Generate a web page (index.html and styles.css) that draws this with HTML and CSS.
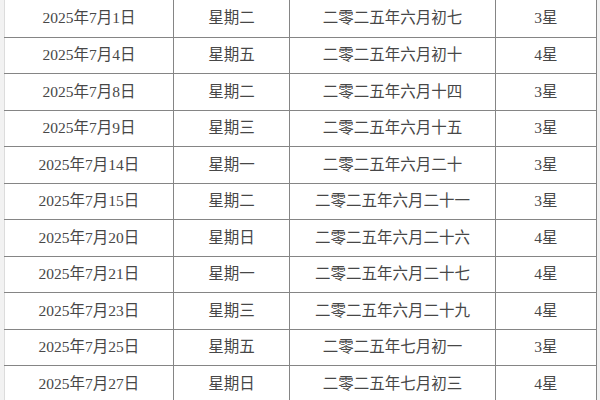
FILE: index.html
```html
<!DOCTYPE html>
<html lang="zh-CN">
<head>
<meta charset="utf-8">
<title>2025年7月</title>
<link rel="stylesheet" href="styles.css">
</head>
<body>
<div class="wrap">
<table class="cal">
<colgroup><col class="c1"><col class="c2"><col class="c3"><col class="c4"></colgroup>
<tbody>
<tr class="first"><td>2025年7月1日</td><td>星期二</td><td>二零二五年六月初七</td><td>3星</td></tr>
<tr><td>2025年7月4日</td><td>星期五</td><td>二零二五年六月初十</td><td>4星</td></tr>
<tr><td>2025年7月8日</td><td>星期二</td><td>二零二五年六月十四</td><td>3星</td></tr>
<tr><td>2025年7月9日</td><td>星期三</td><td>二零二五年六月十五</td><td>3星</td></tr>
<tr><td>2025年7月14日</td><td>星期一</td><td>二零二五年六月二十</td><td>3星</td></tr>
<tr><td>2025年7月15日</td><td>星期二</td><td>二零二五年六月二十一</td><td>3星</td></tr>
<tr><td>2025年7月20日</td><td>星期日</td><td>二零二五年六月二十六</td><td>4星</td></tr>
<tr><td>2025年7月21日</td><td>星期一</td><td>二零二五年六月二十七</td><td>4星</td></tr>
<tr><td>2025年7月23日</td><td>星期三</td><td>二零二五年六月二十九</td><td>4星</td></tr>
<tr><td>2025年7月25日</td><td>星期五</td><td>二零二五年七月初一</td><td>3星</td></tr>
<tr><td>2025年7月27日</td><td>星期日</td><td>二零二五年七月初三</td><td>4星</td></tr>
</tbody>
</table>
</div>
</body>
</html>
```

FILE: styles.css
```css
html, body {
  margin: 0;
  padding: 0;
  background: #f2f2f2;
  overflow: hidden;
}
.wrap {
  width: 600px;
  height: 400px;
  padding-left: 4px;
  box-sizing: border-box;
  overflow: hidden;
}
.cal {
  border-collapse: collapse;
  table-layout: fixed;
  width: 592px;
  background: #fff;
  font-family: "Liberation Serif", "Noto Sans CJK SC", serif;
  font-size: 15.5px;
  color: #474747;
}
.c1 { width: 169px; }
.c2 { width: 116px; }
.c3 { width: 206px; }
.c4 { width: 101px; }
.cal tr {
  height: 36.5px;
}
.cal tr.first {
  height: 37px;
}
.cal td {
  border: 1px solid #858585;
  text-align: center;
  vertical-align: middle;
  padding: 0;
  line-height: 20px;
  white-space: nowrap;
}
.cal td:first-child {
  border-left: 1px solid #dcdcdc;
}
.cal tr.first td {
  border-top: none;
}
```
